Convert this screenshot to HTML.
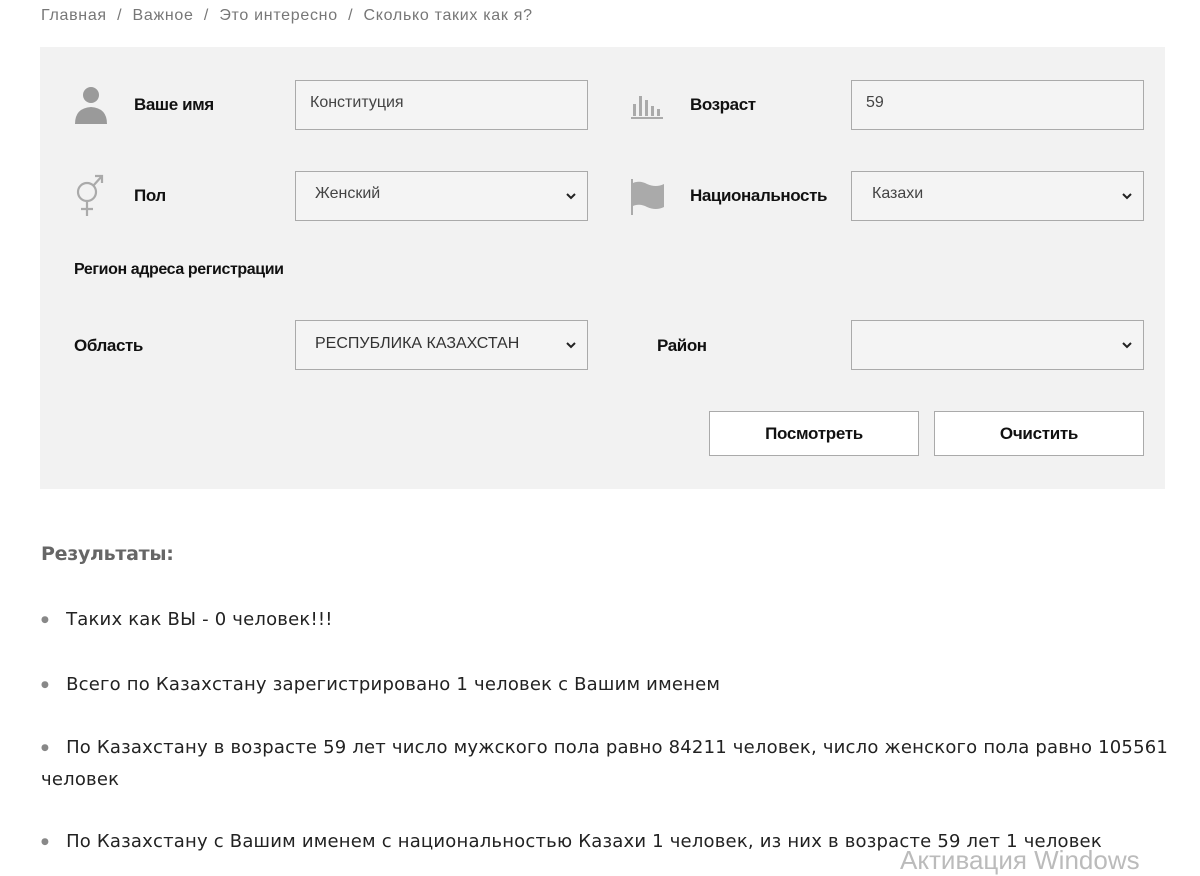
<!DOCTYPE html>
<html><head><meta charset="utf-8"><style>
*{box-sizing:border-box;margin:0;padding:0}
body{width:1200px;height:872px;background:#fff;position:relative;overflow:hidden;font-family:"Liberation Sans",sans-serif;color:#111}
.a{position:absolute;white-space:nowrap}
.bc{top:7px;left:41px;font-size:16px;color:#777;letter-spacing:0.7px}
.panel{position:absolute;left:40px;top:47px;width:1125px;height:442px;background:#f2f2f2}
.lbl{font-size:17px;font-weight:bold;color:#111;letter-spacing:-0.4px}
.box{position:absolute;border:1px solid #aaa;background:#f4f4f4;height:50px;font-size:16px;color:#444;padding:13px 14px}
.box svg{position:absolute;right:10px;top:20px}
.btn{position:absolute;border:1px solid #aaa;background:#fff;height:45px;font-size:17px;font-weight:bold;text-align:center;line-height:43px;letter-spacing:-0.3px}
.res{font-family:"DejaVu Sans",sans-serif;font-size:18px;color:#222;letter-spacing:0.2px}
.res b{font-weight:normal;color:#888;margin-right:17px;font-size:9px;position:relative;top:-3px}
</style></head><body>
<div class="a bc">Главная &nbsp;/&nbsp; Важное &nbsp;/&nbsp; Это интересно &nbsp;/&nbsp; Сколько таких как я?</div>
<div class="panel"></div>
<svg class="a" style="left:74px;top:86px" width="34" height="40" viewBox="0 0 34 40"><circle cx="17" cy="9" r="8" fill="#9a9a9a"/><path d="M1 38 Q1 22 17 21 Q33 22 33 38Z" fill="#9a9a9a"/></svg>
<div class="a lbl" style="left:134px;top:95px">Ваше имя</div>
<div class="box" style="left:295px;top:80px;width:293px">Конституция</div>
<svg class="a" style="left:631px;top:92px" width="32" height="28" viewBox="0 0 32 28"><g fill="#aaa"><rect x="2" y="12" width="3" height="12"/><rect x="8" y="4" width="3" height="20"/><rect x="14" y="8" width="3" height="16"/><rect x="20" y="14" width="3" height="10"/><rect x="26" y="17" width="3" height="7"/><rect x="0" y="25" width="32" height="2"/></g></svg>
<div class="a lbl" style="left:690px;top:95px">Возраст</div>
<div class="box" style="left:851px;top:80px;width:293px">59</div>
<svg class="a" style="left:72px;top:172px" width="34" height="46" viewBox="0 0 34 46"><g fill="none" stroke="#aaa" stroke-width="2.2"><circle cx="15" cy="20" r="9"/><path d="M15 29V44M9 37H21M21 14L30 4M23 4H30V11"/></g></svg>
<div class="a lbl" style="left:134px;top:186px">Пол</div>
<div class="box" style="left:295px;top:171px;width:293px;padding-left:19px">Женский<svg width="12" height="8" viewBox="0 0 12 8"><path d="M2 2l4 4 4-4" stroke="#222" stroke-width="2" fill="none"/></svg></div>
<svg class="a" style="left:630px;top:177px" width="36" height="40" viewBox="0 0 36 40"><path d="M2 2V38" stroke="#aaa" stroke-width="2"/><path d="M3 6Q10 3 17 7Q26 11 34 7V30Q26 34 17 30Q10 26 3 29Z" fill="#aaa"/></svg>
<div class="a lbl" style="left:690px;top:186px">Национальность</div>
<div class="box" style="left:851px;top:171px;width:293px;padding-left:20px">Казахи<svg width="12" height="8" viewBox="0 0 12 8"><path d="M2 2l4 4 4-4" stroke="#222" stroke-width="2" fill="none"/></svg></div>
<div class="a lbl" style="left:74px;top:261px;font-size:16px">Регион адреса регистрации</div>
<div class="a lbl" style="left:74px;top:336px">Область</div>
<div class="box" style="left:295px;top:320px;width:293px;padding-left:19px;font-size:16px;color:#333;padding-top:14px">РЕСПУБЛИКА КАЗАХСТАН<svg width="12" height="8" viewBox="0 0 12 8"><path d="M2 2l4 4 4-4" stroke="#222" stroke-width="2" fill="none"/></svg></div>
<div class="a lbl" style="left:657px;top:336px">Район</div>
<div class="box" style="left:851px;top:320px;width:293px"><svg width="12" height="8" viewBox="0 0 12 8"><path d="M2 2l4 4 4-4" stroke="#222" stroke-width="2" fill="none"/></svg></div>
<div class="btn" style="left:709px;top:411px;width:210px">Посмотреть</div>
<div class="btn" style="left:934px;top:411px;width:210px">Очистить</div>
<div class="a res" style="left:41px;top:543px;font-weight:bold;color:#666;font-size:19px;letter-spacing:-0.3px">Результаты:</div>
<div class="a res" style="left:41px;top:609px"><b>●</b>Таких как ВЫ - 0 человек!!!</div>
<div class="a res" style="left:41px;top:674px"><b>●</b>Всего по Казахстану зарегистрировано 1 человек с Вашим именем</div>
<div class="a res" style="left:41px;top:737px"><b>●</b>По Казахстану в возрасте 59 лет число мужского пола равно 84211 человек, число женского пола равно 105561</div>
<div class="a res" style="left:41px;top:769px">человек</div>
<div class="a res" style="left:41px;top:831px"><b>●</b>По Казахстану с Вашим именем с национальностью Казахи 1 человек, из них в возрасте 59 лет 1 человек</div>
<div class="a" style="left:900px;top:845px;font-size:26px;color:#bbb">Активация Windows</div>
</body></html>
